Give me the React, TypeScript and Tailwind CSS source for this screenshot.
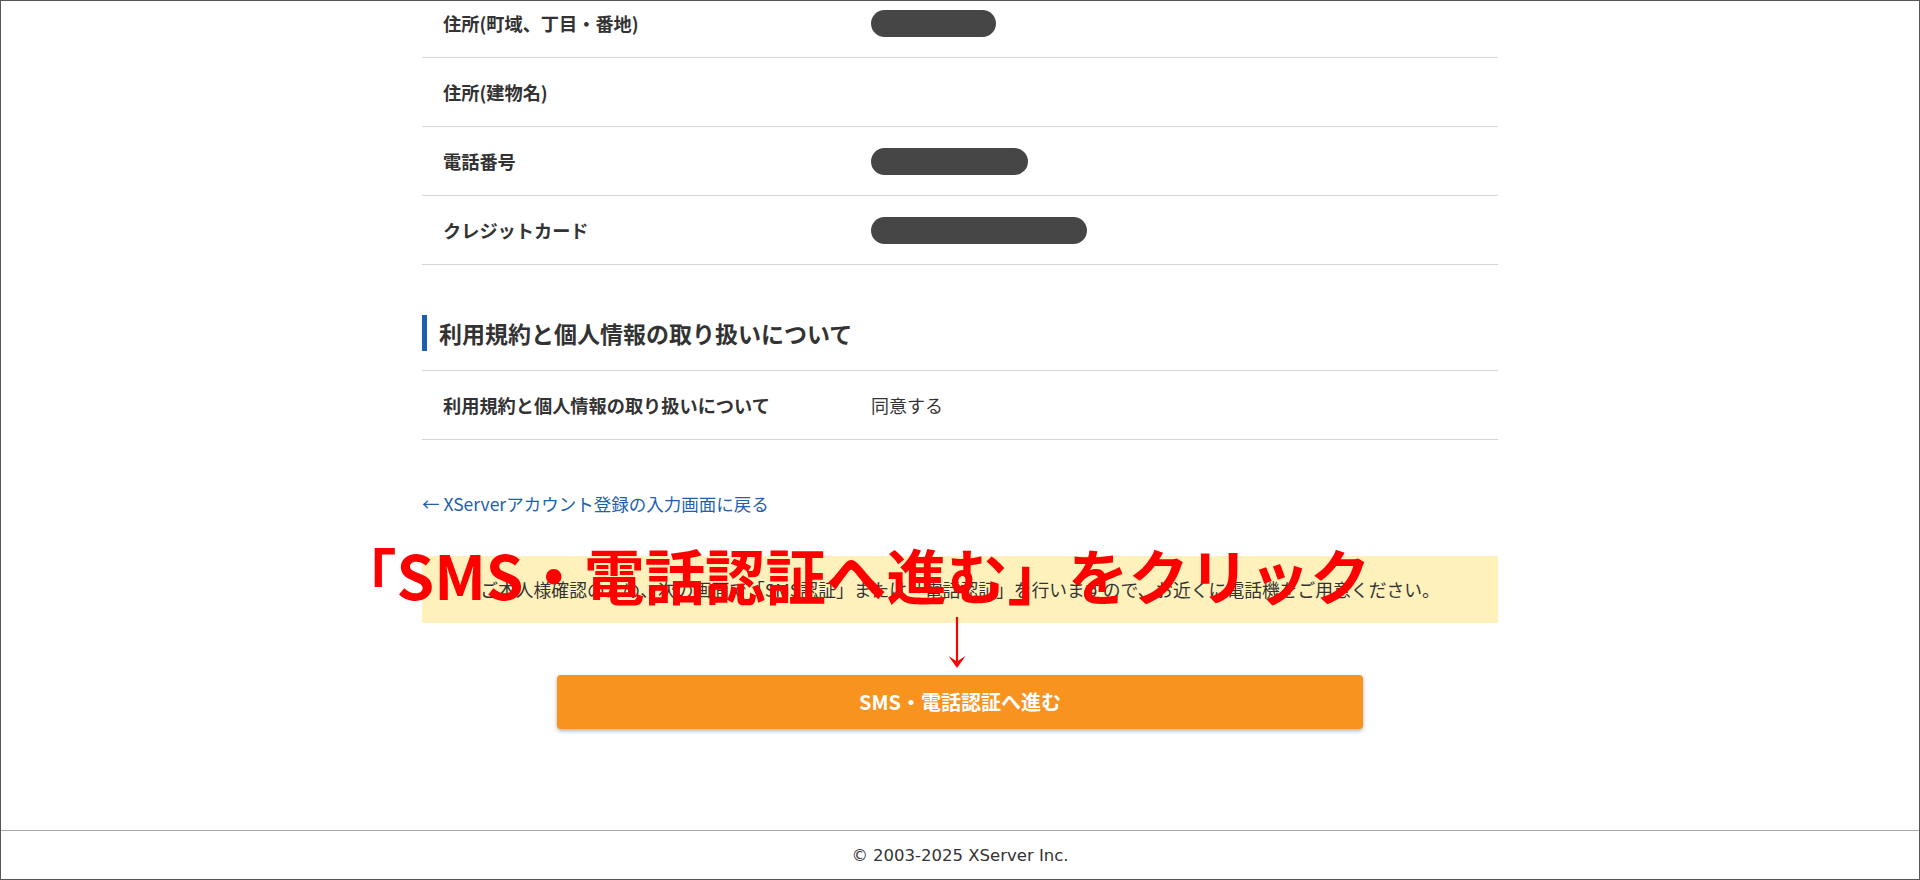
import React from "react";

function Row({ label, children, first }: { label: string; children?: React.ReactNode; first?: boolean }) {
  return (
    <div className={`flex items-center h-[69px] border-b border-[#d6d6d6] ${first ? "-mt-[12px]" : ""}`}>
      <div className="w-[449px] shrink-0 pl-[21px] font-bold text-[18.2px] leading-[26px] text-[#333]">{label}</div>
      <div className="flex-1 text-[18px] leading-[26px] text-[#333]">{children}</div>
    </div>
  );
}

function Pill({ w }: { w: string }) {
  return <span className={`block h-[27px] rounded-full bg-[#464646] ${w}`} />;
}

export default function App() {
  return (
    <div className="h-[880px] w-full border border-[#555] flex flex-col bg-white overflow-hidden text-[#333] font-['Noto_Sans_CJK_JP','Noto_Sans',sans-serif]">
      <main className="flex-1">
        <div className="w-[1076px] mx-auto">
          <div>
            <Row label="住所(町域、丁目・番地)" first>
              <Pill w="w-[125px]" />
            </Row>
            <Row label="住所(建物名)" />
            <Row label="電話番号">
              <Pill w="w-[157px]" />
            </Row>
            <Row label="クレジットカード">
              <Pill w="w-[216px]" />
            </Row>
          </div>

          <div className="mt-[50px] flex items-center h-[36px]">
            <span className="w-[5px] h-full bg-[#1b5fb3]" />
            <h2 className="ml-[12px] text-[23px] leading-[32px] font-bold text-[#333]">利用規約と個人情報の取り扱いについて</h2>
          </div>

          <div className="mt-[19px] border-t border-[#d6d6d6]">
            <Row label="利用規約と個人情報の取り扱いについて">同意する</Row>
          </div>

          <a href="#" className="block mt-[52px] text-[17.5px] leading-[24px] text-[#1d5fb0]">
            ← XServerアカウント登録の入力画面に戻る
          </a>

          <div className="relative mt-[40px]">
            <div className="h-[67px] bg-[#fff1bb] flex items-center justify-center text-[17.8px] text-[#333]">
              ご本人様確認のため、次の画面で「SMS認証」または「電話認証」を行いますので、お近くに電話機をご用意ください。
            </div>
            <div className="absolute left-[-86px] top-[-13px] text-[60.5px] leading-[61px] font-bold text-[#ff0000] whitespace-nowrap pointer-events-none">
              「SMS・電話認証へ進む」をクリック
            </div>
            <svg className="absolute left-[525px] top-[61px]" width="20" height="52" viewBox="0 0 20 52">
              <line x1="10" y1="0" x2="10" y2="46" stroke="#ff0000" strokeWidth="2.2" />
              <path d="M1.5 39 L10 51 L18.5 39 L10 44.5 Z" fill="#ff0000" />
            </svg>
          </div>

          <div className="mt-[52px] flex justify-center">
            <button className="w-[806px] h-[54px] rounded-[4px] bg-[#f7931e] text-white font-bold text-[20px] shadow-[0_2px_4px_rgba(0,0,0,0.3)]">
              SMS・電話認証へ進む
            </button>
          </div>
        </div>
      </main>
      <footer className="h-[49px] shrink-0 border-t border-[#a8a8a8] flex items-center justify-center pt-[2px] text-[16.5px] text-[#333] font-['DejaVu_Sans','Noto_Sans_CJK_JP',sans-serif]">
        © 2003-2025 XServer Inc.
      </footer>
    </div>
  );
}
